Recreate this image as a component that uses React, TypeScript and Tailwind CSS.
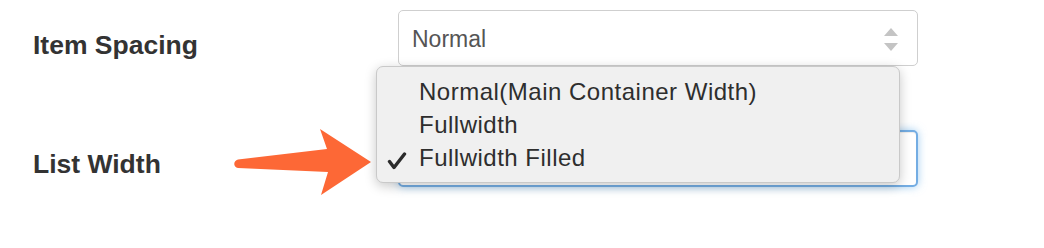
import React from "react";

function SelectArrows() {
  return (
    <svg width="16" height="26" viewBox="0 0 16 26" className="shrink-0">
      <path d="M1 9 L8 1 L15 9 Z" fill="#c4c4c4" />
      <path d="M1 16 L8 24 L15 16 Z" fill="#c4c4c4" />
    </svg>
  );
}

function Check() {
  return (
    <svg width="20" height="18" viewBox="0 0 20 18" className="absolute left-[10px] top-[85px]">
      <path d="M2.5 9.5 L7 15.5 L17.5 2" fill="none" stroke="#2b2b2b" strokeWidth="3.4" strokeLinecap="round" strokeLinejoin="round" />
    </svg>
  );
}

export default function App() {
  return (
    <div className="relative w-[1044px] h-[248px] bg-white font-['Liberation_Sans',Arial,sans-serif] overflow-hidden">
      <div className="flex flex-col gap-[64px] pt-[10px] pl-[33px]">
        <div className="flex items-start">
          <div className="w-[365px] mt-[20px] text-[26.5px] leading-[30px] font-bold text-[#333]">
            Item Spacing
          </div>
          <div className="w-[520px] h-[56px] rounded-[5px] border border-[#cfcfcf] bg-white flex items-start justify-between pl-[13px] pr-[18px] pt-[14px]">
            <span className="text-[23px] leading-[28px] text-[#555]">Normal</span>
            <span className="pt-[2px]">
              <SelectArrows />
            </span>
          </div>
        </div>
        <div className="flex items-start">
          <div className="w-[365px] mt-[19px] text-[26.5px] leading-[30px] font-bold text-[#333]">
            List Width
          </div>
          <div className="w-[520px] h-[57px] rounded-[5px] border-2 border-[#74ade3] bg-white shadow-[inset_0_1px_1px_rgba(0,0,0,0.075),0_0_8px_rgba(102,175,233,0.6)]" />
        </div>
      </div>

      <svg width="150" height="80" viewBox="0 0 150 80" className="absolute left-[230px] top-[124px]">
        <path
          d="M8 35.5 C3 36.5 3 43.5 8 44 L98 48 L91 71 L141 38 L90 5 L97 25 Z"
          fill="#fd6836"
        />
      </svg>

      <div className="absolute left-[376px] top-[66px] w-[524px] h-[117px] rounded-[7px] border border-[#c9c9c9] bg-[#f0f0f0] shadow-[0_3px_12px_rgba(0,0,0,0.22)] pt-[8px] pl-[42px] text-[24px] leading-[33px] tracking-[0.5px] text-[#2e2e2e]">
        <div>Normal(Main Container Width)</div>
        <div>Fullwidth</div>
        <div>Fullwidth Filled</div>
        <Check />
      </div>
    </div>
  );
}
